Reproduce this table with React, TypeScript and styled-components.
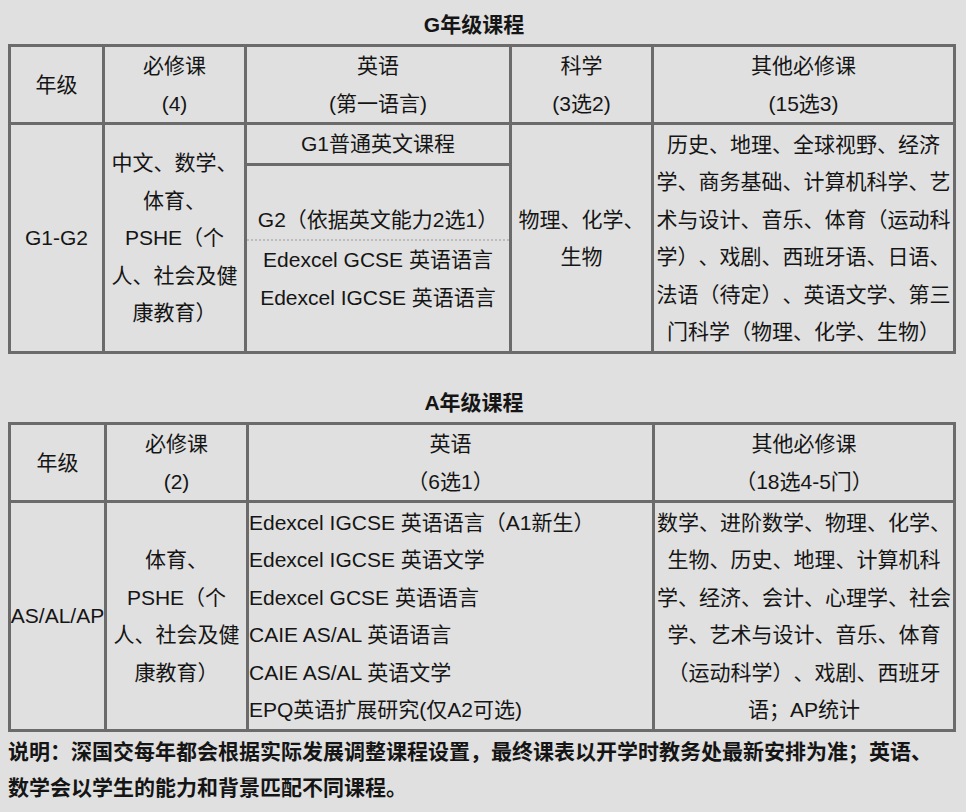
import styled, { createGlobalStyle } from "styled-components";

const GlobalStyle = createGlobalStyle`
    body {
        margin: 0;
        background: #e0e0e0;
        color: #151515;
        font-family: "Liberation Sans", "Noto Sans CJK SC", sans-serif;
        text-spacing-trim: space-all;
    }
`;

const Page = styled.div`
    padding: 0 10px 0 8px;
    width: 948px;
`;

const Title = styled.h2<{ $top: number }>`
    margin: 0;
    padding: ${(props) => props.$top}px 16px 0 0;
    font-size: 21px;
    font-weight: bold;
    line-height: 38px;
    text-align: center;
`;

const Grid = styled.div<{ $cols: string; $rows: string }>`
    display: grid;
    grid-template-columns: ${(props) => props.$cols};
    grid-template-rows: ${(props) => props.$rows};
    box-sizing: border-box;
    width: 948px;
    border-top: 3px solid #6b6b6b;
    border-left: 3px solid #6b6b6b;
    font-size: 21px;
`;

const Cell = styled.div<{ $col?: string; $row?: string; $left?: boolean; $stretch?: boolean }>`
    box-sizing: border-box;
    display: flex;
    flex-direction: column;
    justify-content: center;
    align-items: ${(props) =>
        props.$stretch ? "stretch" : props.$left ? "flex-start" : "center"};
    text-align: ${(props) => (props.$left ? "left" : "center")};
    grid-column: ${(props) => props.$col || "auto"};
    grid-row: ${(props) => props.$row || "auto"};
    border-right: 3px solid #6b6b6b;
    border-bottom: 3px solid #6b6b6b;
    min-width: 0;
`;

const Line = styled.div`
    line-height: 37.5px;
    white-space: nowrap;
`;

const OptionLine = styled.div<{ $dotted?: boolean }>`
    line-height: 38px;
    white-space: nowrap;
    border-bottom: ${(props) => (props.$dotted ? "2px dotted #bcbcbc" : "none")};
`;

const Note = styled.p`
    margin: 0;
    padding-top: 2px;
    font-size: 21px;
    font-weight: bold;
    line-height: 36px;
`;

interface ICellData {
    lines: string[];
    left?: boolean;
}

const Lines = ({ lines }: { lines: string[] }) => (
    <>
        {lines.map((text, i) => (
            <Line key={i}>{text}</Line>
        ))}
    </>
);

const gHead: ICellData[] = [
    { lines: ["年级"] },
    { lines: ["必修课", "(4)"] },
    { lines: ["英语", "(第一语言)"] },
    { lines: ["科学", "(3选2)"] },
    { lines: ["其他必修课", "(15选3)"] },
];

const aHead: ICellData[] = [
    { lines: ["年级"] },
    { lines: ["必修课", "(2)"] },
    { lines: ["英语", "（6选1）"] },
    { lines: ["其他必修课", "（18选4-5门）"] },
];

const aBody: ICellData[] = [
    { lines: ["AS/AL/AP"] },
    { lines: ["体育、", "PSHE（个", "人、社会及健", "康教育）"] },
    {
        lines: [
            "Edexcel IGCSE 英语语言（A1新生）",
            "Edexcel IGCSE 英语文学",
            "Edexcel GCSE 英语语言",
            "CAIE AS/AL 英语语言",
            "CAIE AS/AL 英语文学",
            "EPQ英语扩展研究(仅A2可选)",
        ],
        left: true,
    },
    {
        lines: [
            "数学、进阶数学、物理、化学、",
            "生物、历史、地理、计算机科",
            "学、经济、会计、心理学、社会",
            "学、艺术与设计、音乐、体育",
            "（运动科学）、戏剧、西班牙",
            "语；AP统计",
        ],
    },
];

function App() {
    return (
        <Page>
            <GlobalStyle />
            <Title $top={6}>G年级课程</Title>
            <Grid $cols="94px 142px 265px 142px 302px" $rows="78px 41px 188px">
                {gHead.map((cell, i) => (
                    <Cell key={i} $col={`${i + 1}`} $row="1">
                        <Lines lines={cell.lines} />
                    </Cell>
                ))}
                <Cell $col="1" $row="2 / 4">
                    <Lines lines={["G1-G2"]} />
                </Cell>
                <Cell $col="2" $row="2 / 4">
                    <Lines lines={["中文、数学、", "体育、", "PSHE（个", "人、社会及健", "康教育）"]} />
                </Cell>
                <Cell $col="3" $row="2">
                    <Lines lines={["G1普通英文课程"]} />
                </Cell>
                <Cell $col="3" $row="3" $stretch>
                    <OptionLine $dotted>G2（依据英文能力2选1）</OptionLine>
                    <OptionLine>Edexcel GCSE 英语语言</OptionLine>
                    <OptionLine>Edexcel IGCSE 英语语言</OptionLine>
                </Cell>
                <Cell $col="4" $row="2 / 4">
                    <Lines lines={["物理、化学、", "生物"]} />
                </Cell>
                <Cell $col="5" $row="2 / 4">
                    <Lines
                        lines={[
                            "历史、地理、全球视野、经济",
                            "学、商务基础、计算机科学、艺",
                            "术与设计、音乐、体育（运动科",
                            "学）、戏剧、西班牙语、日语、",
                            "法语（待定）、英语文学、第三",
                            "门科学（物理、化学、生物）",
                        ]}
                    />
                </Cell>
            </Grid>

            <Title $top={30}>A年级课程</Title>
            <Grid $cols="96px 142px 406px 301px" $rows="78px 229px">
                {[...aHead, ...aBody].map((cell, i) => (
                    <Cell key={i} $left={cell.left}>
                        <Lines lines={cell.lines} />
                    </Cell>
                ))}
            </Grid>

            <Note>
                说明：深国交每年都会根据实际发展调整课程设置，最终课表以开学时教务处最新安排为准；英语、
                <br />
                数学会以学生的能力和背景匹配不同课程。
            </Note>
        </Page>
    );
}

export default App;
